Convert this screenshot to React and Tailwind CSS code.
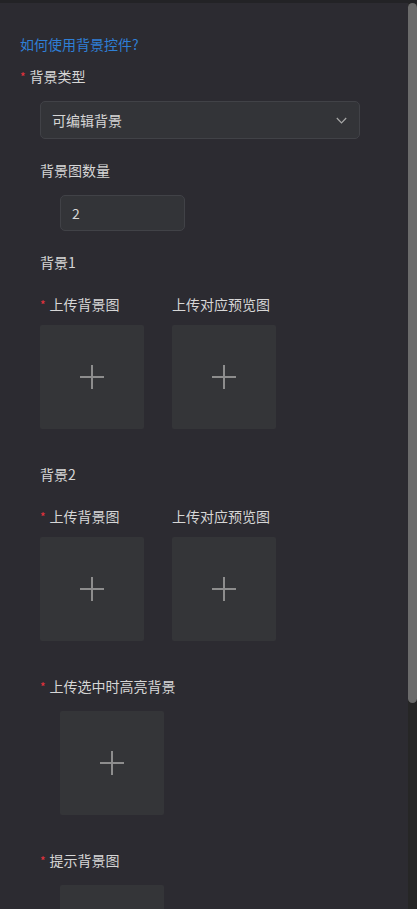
const font = { fontFamily: '"Noto Sans CJK SC", "Noto Sans", sans-serif' };

function Star() {
  return <span className="text-[#e5323e] text-[12px] mr-[4px] leading-none relative top-[1px]">*</span>;
}

function Label({ children, required, className = '' }) {
  return (
    <div className={`flex items-center h-[22px] text-[14px] text-[#d6d6d6] ${className}`}>
      {required && <Star />}
      <span>{children}</span>
    </div>
  );
}

function PlusBox() {
  return (
    <div className="w-[104px] h-[104px] bg-[#343538] rounded-[2px] flex items-center justify-center">
      <svg width="24" height="24" viewBox="0 0 24 24">
        <rect x="0" y="11" width="24" height="2" fill="#8d8d8d" />
        <rect x="11" y="0" width="2" height="24" fill="#8d8d8d" />
      </svg>
    </div>
  );
}

function UploadPair({ title }) {
  return (
    <div className="pl-[40px]">
      <Label className="mt-[34px]">{title}</Label>
      <div className="flex gap-[28px] mt-[20px]">
        <div>
          <Label required>上传背景图</Label>
          <div className="mt-[10px]">
            <PlusBox />
          </div>
        </div>
        <div>
          <Label>上传对应预览图</Label>
          <div className="mt-[10px]">
            <PlusBox />
          </div>
        </div>
      </div>
    </div>
  );
}

export default function App() {
  return (
    <div className="h-[909px] w-[417px] flex flex-col bg-[#2c2b31] overflow-hidden" style={font}>
      <div className="h-[3px] bg-[#232326] shrink-0" />
      <div className="flex flex-1 min-h-0">
        <div className="flex-1 overflow-hidden">
          {/* help link */}
          <div className="pl-[20px] pt-[30px]">
            <div className="h-[22px] flex items-center text-[14px] text-[#2f7fd6]">如何使用背景控件?</div>
            <Label required className="mt-[10px]">背景类型</Label>
          </div>

          {/* select */}
          <div className="pl-[40px] mt-[14px]">
            <div className="w-[320px] h-[38px] bg-[#333438] border border-[#414247] rounded-[5px] flex items-center justify-between pl-[11px] pr-[12px]">
              <span className="text-[14px] text-[#d6d6d6]">可编辑背景</span>
              <svg width="11" height="7" viewBox="0 0 11 7">
                <polyline points="0.8,1 5.5,5.8 10.2,1" fill="none" stroke="#a8a8a8" strokeWidth="1.2" />
              </svg>
            </div>

            <Label className="mt-[20px]">背景图数量</Label>
            <div className="ml-[20px] mt-[14px] w-[125px] h-[36px] bg-[#333438] border border-[#414247] rounded-[5px] flex items-center pl-[11px]">
              <span className="text-[14px] text-[#d6d6d6]">2</span>
            </div>
          </div>

          {/* backgrounds */}
          <div className="-mt-[14px]">
            <UploadPair title="背景1" />
            <UploadPair title="背景2" />
          </div>

          <div className="pl-[40px]">
            <Label required className="mt-[34px]">上传选中时高亮背景</Label>
            <div className="ml-[20px] mt-[14px]">
              <PlusBox />
            </div>
            <Label required className="mt-[34px]">提示背景图</Label>
            <div className="ml-[20px] mt-[14px]">
              <PlusBox />
            </div>
          </div>
        </div>

        {/* scrollbar */}
        <div className="w-[9px] shrink-0 flex flex-col bg-[#262626]">
          <div className="h-[700px] bg-[#6b6b6b] rounded-[5px]" />
        </div>
      </div>
    </div>
  );
}
